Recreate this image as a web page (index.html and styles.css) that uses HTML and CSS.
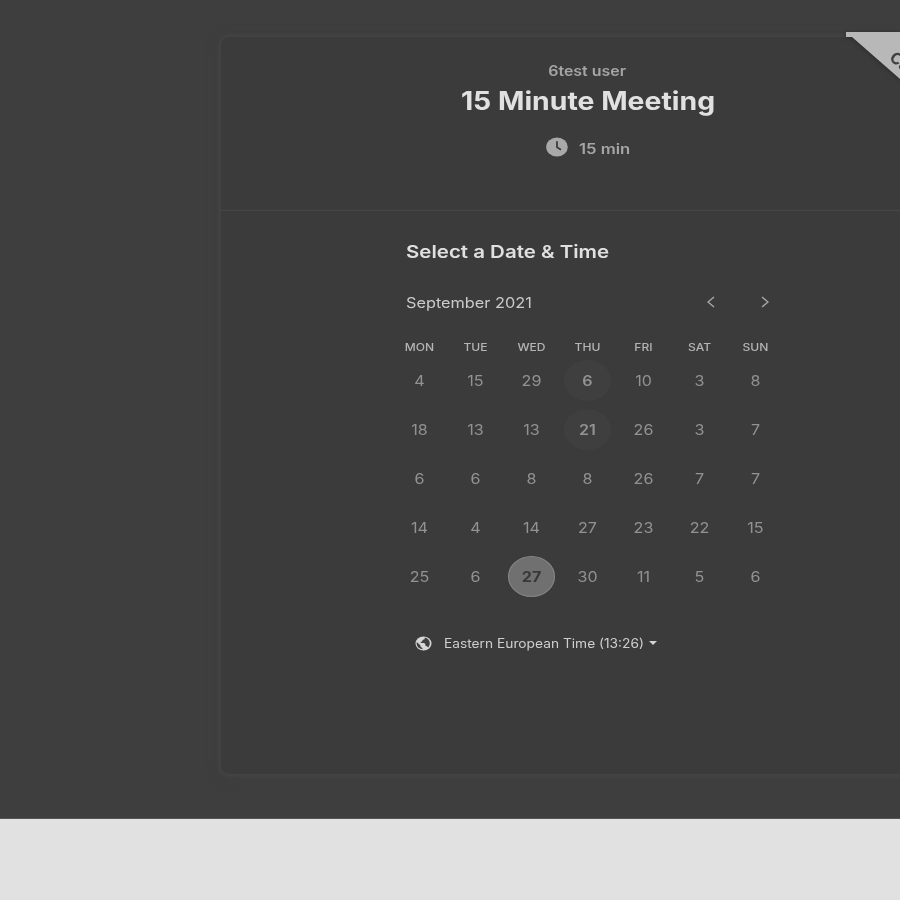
FILE: index.html
```html
<!DOCTYPE html>
<html lang="en">
<head>
<meta charset="utf-8">
<title>15 Minute Meeting</title>
<link rel="stylesheet" href="styles.css">
</head>
<body>
<main class="stage">
  <section class="card">
    <header class="intro">
      <div class="host"><span>6test user</span></div>
      <h1 class="title"><span>15 Minute Meeting</span></h1>
      <div class="duration">
        <svg class="clock" viewBox="0 0 22 20" preserveAspectRatio="none"><ellipse cx="11" cy="10" rx="10.8" ry="9.6" fill="#a9a9a9"/><path d="M11 4.2V10.3L15 12.7" fill="none" stroke="#3b3b3b" stroke-width="1.8"/></svg>
        <span>15 min</span>
      </div>
    </header>
    <div class="picker">
      <h2 class="heading"><span>Select a Date &amp; Time</span></h2>
      <div class="monthbar">
        <div class="monthbox"><span class="month">September 2021</span></div>
        <svg class="arrow" viewBox="0 0 8 12"><path d="M7 1L1 6L7 11"/></svg>
        <svg class="arrow" viewBox="0 0 8 12"><path d="M1 1L7 6L1 11"/></svg>
      </div>
      <div class="week names"><span>MON</span><span>TUE</span><span>WED</span><span>THU</span><span>FRI</span><span>SAT</span><span>SUN</span></div>
      <div class="week"><span>4</span><span>15</span><span>29</span><span class="open">6</span><span>10</span><span>3</span><span>8</span></div>
      <div class="week"><span>18</span><span>13</span><span>13</span><span class="open">21</span><span>26</span><span>3</span><span>7</span></div>
      <div class="week"><span>6</span><span>6</span><span>8</span><span>8</span><span>26</span><span>7</span><span>7</span></div>
      <div class="week"><span>14</span><span>4</span><span>14</span><span>27</span><span>23</span><span>22</span><span>15</span></div>
      <div class="week"><span>25</span><span>6</span><span class="selected">27</span><span>30</span><span>11</span><span>5</span><span>6</span></div>
      <div class="zone">
        <svg class="globe" viewBox="0 0 17 15"><ellipse cx="8.5" cy="7.5" rx="8" ry="7" fill="#d6d6d6"/><path d="M10 1.5L9.5 3.2L7.6 4L7.2 5.4L5.5 6L6 7H9.2L10.5 8.6V10L12 10.2L13.2 11.5C15 9.5 15.3 7 14.2 4.8C13.3 3 11.8 2 10 1.5ZM1.8 6.1L5.5 9.4V10.7L7.4 12V13.3C3.5 12.8 1 9.7 1.8 6.1Z" fill="#3f3f3f"/></svg>
        <span class="zonename">Eastern European Time (13:26)</span>
        <svg class="caret" viewBox="0 0 8 4"><path d="M0 0H8L4 4Z" fill="#d4d4d4"/></svg>
      </div>
    </div>
  </section>
  <svg class="ribbon" viewBox="0 0 54 54"><path d="M0 0H54V47L6 5H0Z" fill="#b8b8b8"/><text x="42.5" y="27" transform="rotate(41 42.5 27)">Ca</text></svg>
</main>
<footer class="footer"></footer>
</body>
</html>
```
FILE: styles.css
```css
* { box-sizing: border-box; }
body { margin: 0; width: 900px; height: 900px; overflow: hidden; background: #e1e1e1; font-family: Inter, "Open Sans", sans-serif; }
.stage { position: relative; height: 819px; padding: 36px 0 0 220px; overflow: hidden; background: #3e3e3e; border-bottom: 1px solid #555; }
.card { width: 735px; height: 739px; border: 1px solid #434343; border-radius: 9px; background: #3b3b3b; box-shadow: 0 0 4px 1px #454545, 0 2px 12px #414141; }
.intro { height: 174px; padding-top: 23px; border-bottom: 1px solid #464646; text-align: center; color: #a5a5a5; font-weight: 600; }
.host { height: 22px; font-size: 14px; line-height: 22px; }
.host span, .title span, .heading span, .month, .zonename { display: inline-block; }
.host span { transform: scaleX(1.14); }
.title { margin: 0; height: 38px; font-size: 25px; line-height: 38px; color: #e1e1e1; font-weight: 700; }
.title span { transform: scaleX(1.135); }
.duration { display: flex; justify-content: center; align-items: center; gap: 11px; height: 22px; margin: 16px 6px 0 0; font-size: 14.5px; }
.duration span { padding-top: 3px; transform: scaleX(1.15); transform-origin: left; }
.clock { width: 22px; height: 20px; margin-top: -1px; }
.picker { width: 392px; margin-left: 171px; padding-top: 27px; }
.heading { margin: 0 0 0 14px; height: 28px; font-size: 17.5px; line-height: 28px; font-weight: 600; color: #e0e0e0; }
.heading span { transform-origin: left; transform: scaleX(1.17); }
.monthbar { display: flex; align-items: center; height: 24px; margin: 24px 15px 0 14px; }
.monthbox { flex: 1; font-size: 14.5px; color: #cacaca; }
.month { transform-origin: left; transform: scaleX(1.123); }
.arrow { width: 8px; height: 12px; fill: none; stroke: #a8a8a8; stroke-width: 1.4; }
.arrow + .arrow { margin-left: 46px; }
.week { display: grid; grid-template-columns: repeat(7, 56px); height: 49px; margin-left: -0.5px; place-items: center; font-size: 14px; color: #929292; }
.week span { display: grid; place-items: center; width: 41px; height: 41px; transform: scaleX(1.15); }
.week.names { height: 20px; margin: 23px 0 0 -1px; font-size: 10.5px; font-weight: 500; color: #b4b4b4; }
.week.names span { height: 20px; }
.names + .week { margin-top: -1px; }
.week .open { border-radius: 50%; background: #3f3f3f; font-weight: 600; }
.week .selected { border: 1px solid #858585; border-radius: 50%; background: #707070; color: #383838; font-weight: 700; }
.zone { display: flex; align-items: center; height: 24px; margin: 30px 0 0 23px; font-size: 12.5px; color: #cecece; }
.globe { width: 17px; height: 15px; margin-right: 12px; }
.zonename { width: 200px; white-space: nowrap; transform-origin: left; transform: scaleX(1.1); }
.caret { width: 8px; height: 4px; margin-left: 5px; }
.ribbon { position: absolute; left: 846px; top: 32px; width: 54px; height: 54px; filter: drop-shadow(0 1px 2px #292929); }
.ribbon text { font: 700 16px Inter, sans-serif; fill: #414141; }
.footer { height: 81px; background: #e1e1e1; }
```
